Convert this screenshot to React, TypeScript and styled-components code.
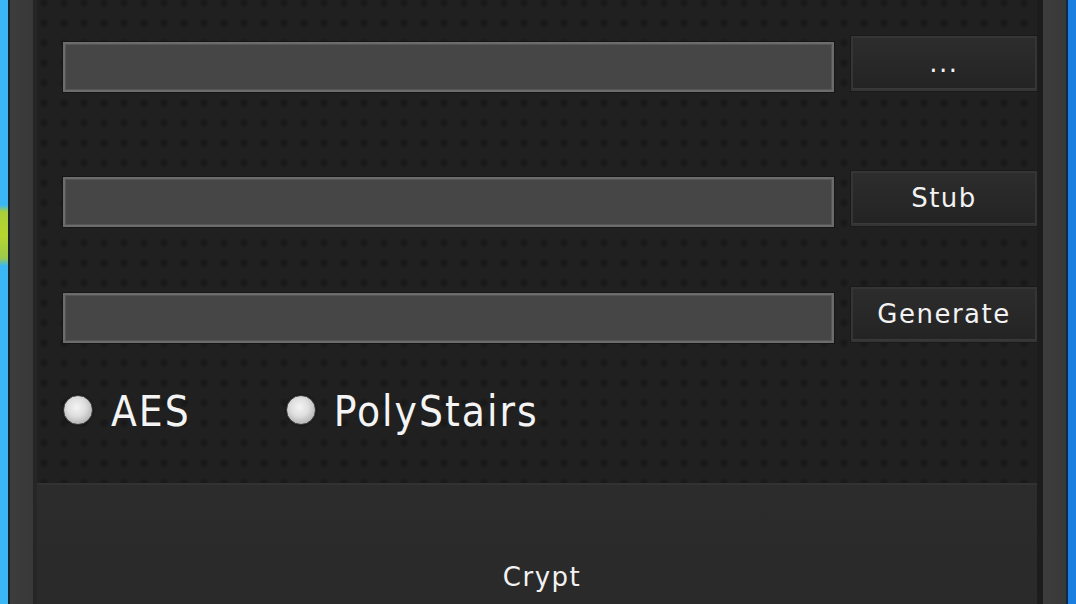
import React from "react";
import styled, { createGlobalStyle } from "styled-components";

const Global = createGlobalStyle`
  html, body { margin: 0; padding: 0; background: #1f1f1f; }
  #root { width: 1076px; height: 604px; overflow: hidden; }
`;

const Screen = styled.div`
  display: flex;
  width: 1076px;
  height: 604px;
  overflow: hidden;
`;

const Desktop = styled.div<{ $side: "left" | "right" }>`
  flex: 0 0 8px;
  background: ${(p) =>
    p.$side === "left"
      ? "linear-gradient(180deg, #3bb8f3 0px, #3bb8f3 205px, #a9cf3a 212px, #b8d52e 235px, #9cc94a 258px, #3bb8f3 266px, #3bb8f3 100%)"
      : "#1b7fe2"};
`;

const EdgeLine = styled.div<{ $w: number; $c: string }>`
  flex: 0 0 ${(p) => p.$w}px;
  background: ${(p) => p.$c};
`;

const Frame = styled.div`
  flex: 0 0 23px;
  background: linear-gradient(90deg, #3d3d3d, #383838);
`;

const Panel = styled.div`
  flex: 1;
  display: flex;
  flex-direction: column;
  min-width: 0;
`;

const Textured = styled.div`
  flex: 0 0 483px;
  box-sizing: border-box;
  padding: 0 0 0 26px;
  display: flex;
  flex-direction: column;
  background-color: #202020;
  background-image:
    radial-gradient(circle at 50% 50%, rgba(0, 0, 0, 0.26) 0px, rgba(0, 0, 0, 0.16) 3px, transparent 5px);
  background-size: 20px 20px;
  background-position: -3px -7px;
`;

const Row = styled.div<{ $top: number }>`
  display: flex;
  align-items: flex-end;
  gap: 16px;
  margin-top: ${(p) => p.$top}px;
`;

const Field = styled.div`
  flex: 0 0 771px;
  height: 50px;
  box-sizing: border-box;
  border: 2px solid #6c6c6c;
  box-shadow: inset 0 0 0 1px #565656, 0 0 0 1px #161616;
  background: #464646;
`;

const Button = styled.div`
  flex: 0 0 188px;
  height: 57px;
  box-sizing: border-box;
  display: flex;
  align-items: center;
  justify-content: center;
  background: linear-gradient(180deg, #2d2d2d 0%, #272727 60%, #232323 100%);
  border: 1px solid #1a1a1a;
  box-shadow: inset 0 0 0 2px #353535, inset 0 -3px 0 #3a3a3a;
  color: #f2f2f2;
  font-family: "DejaVu Sans", Verdana, sans-serif;
  font-size: 26px;
  letter-spacing: 1.5px;
  padding-bottom: 2px;
`;

const RadioGroup = styled.div`
  display: flex;
  align-items: center;
  gap: 95px;
  margin-top: 47px;
`;

const RadioOption = styled.label`
  display: flex;
  align-items: center;
  gap: 18px;
  color: #f4f4f4;
  font-family: "DejaVu Sans Condensed", "DejaVu Sans", Tahoma, sans-serif;
  font-size: 42px;
  line-height: 44px;
  letter-spacing: 2px;
`;

const RadioDot = styled.span`
  width: 30px;
  height: 30px;
  box-sizing: border-box;
  border-radius: 50%;
  border: 1px solid #3c3c3c;
  background: radial-gradient(circle at 45% 40%, #f4f4f4 0%, #dedede 40%, #b4b4b4 75%, #8e8e8e 100%);
  box-shadow: 0 0 2px rgba(0, 0, 0, 0.8);
  margin-top: -4px;
`;

const CryptButton = styled.div`
  flex: 0 0 186px;
  box-sizing: border-box;
  display: flex;
  align-items: center;
  justify-content: center;
  padding-left: 10px;
  border-top: 2px solid #323232;
  background: linear-gradient(180deg, #2c2c2c 0%, #282828 100%);
  color: #f2f2f2;
  font-family: "DejaVu Sans", Verdana, sans-serif;
  font-size: 26px;
  letter-spacing: 1.5px;
`;

export default function App() {
  return (
    <>
      <Global />
      <Screen>
        <Desktop $side="left" />
        <EdgeLine $w={2} $c="#18242c" />
        <Frame />
        <EdgeLine $w={4} $c="#262626" />
        <Panel>
          <Textured>
            <Row $top={35}>
              <Field />
              <Button>...</Button>
            </Row>
            <Row $top={78}>
              <Field />
              <Button>Stub</Button>
            </Row>
            <Row $top={59}>
              <Field />
              <Button>Generate</Button>
            </Row>
            <RadioGroup>
              <RadioOption>
                <RadioDot />
                AES
              </RadioOption>
              <RadioOption>
                <RadioDot />
                PolyStairs
              </RadioOption>
            </RadioGroup>
          </Textured>
          <CryptButton>Crypt</CryptButton>
        </Panel>
        <EdgeLine $w={6} $c="#1c1c1c" />
        <Frame />
        <EdgeLine $w={2} $c="#0f2a45" />
        <Desktop $side="right" />
      </Screen>
    </>
  );
}
